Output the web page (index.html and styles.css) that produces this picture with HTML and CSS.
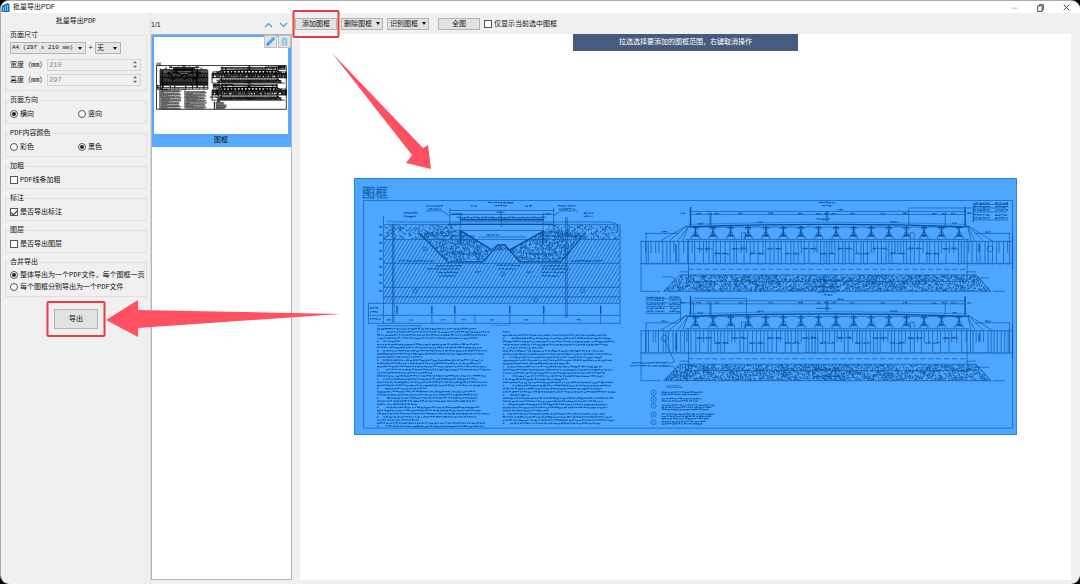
FILE: index.html
```html
<!DOCTYPE html>
<html lang="zh-CN">
<head>
<meta charset="utf-8">
<title>批量导出PDF</title>
<link rel="stylesheet" href="styles.css">
</head>
<body>
<div class="window">
  <header class="titlebar">
    <svg class="app-icon" viewBox="0 0 8 9" aria-hidden="true"><path d="M0 3 6 0 8 1v8H0z" fill="#1f6fb8"/><path d="M2 8V4M4 8V3M6 8V2" stroke="#8cc4ee" stroke-width="1"/></svg>
    <h1 class="app-title">批量导出PDF</h1>
    <div class="window-buttons">
      <button class="win-btn" type="button" aria-label="最小化"><svg viewBox="0 0 8 8"><path d="M1.500 4.500h5" stroke="#c8c8c8"/></svg></button>
      <button class="win-btn" type="button" aria-label="还原"><svg viewBox="0 0 8 8"><path d="M1.500 2.500h4v5h-4zM3 2.500v-1h3.500v4.500h-1" fill="none" stroke="#333" stroke-width=".8"/></svg></button>
      <button class="win-btn" type="button" aria-label="关闭"><svg viewBox="0 0 8 8"><path d="m1.500 1.500 5 5m0-5-5 5" stroke="#333" stroke-width=".8"/></svg></button>
    </div>
  </header>

  <div class="workspace">
    <form class="settings">
      <h2 class="panel-title">批量导出PDF</h2>

      <fieldset class="group">
        <legend>页面尺寸</legend>
        <div class="size-row">
          <span class="select-box select-paper"><select aria-label="纸张"><option>A4 (297 x 210 mm)</option></select></span>
          <span class="plus">+</span>
          <span class="select-box select-extra"><select aria-label="加长"><option>无</option></select></span>
        </div>
        <div class="field"><label for="pw">宽度（mm）</label><span class="spin"><input id="pw" type="text" value="210" disabled><svg viewBox="0 0 5 9"><path d="M2.500 0 5 3H0zM2.500 9 5 6H0z"/></svg></span></div>
        <div class="field"><label for="ph">高度（mm）</label><span class="spin"><input id="ph" type="text" value="297" disabled><svg viewBox="0 0 5 9"><path d="M2.500 0 5 3H0zM2.500 9 5 6H0z"/></svg></span></div>
      </fieldset>

      <fieldset class="group">
        <legend>页面方向</legend>
        <div class="options pair">
          <label class="option"><input type="radio" name="dir" checked>横向</label>
          <label class="option"><input type="radio" name="dir">竖向</label>
        </div>
      </fieldset>

      <fieldset class="group">
        <legend>PDF内容颜色</legend>
        <div class="options pair">
          <label class="option"><input type="radio" name="color">彩色</label>
          <label class="option"><input type="radio" name="color" checked>黑色</label>
        </div>
      </fieldset>

      <fieldset class="group tight">
        <legend>加粗</legend>
        <div class="options"><label class="option"><input type="checkbox">PDF线条加粗</label></div>
      </fieldset>

      <fieldset class="group tight">
        <legend>标注</legend>
        <div class="options"><label class="option"><input type="checkbox" checked>是否导出标注</label></div>
      </fieldset>

      <fieldset class="group tight">
        <legend>图层</legend>
        <div class="options"><label class="option"><input type="checkbox">是否导出图层</label></div>
      </fieldset>

      <fieldset class="group">
        <legend>合并导出</legend>
        <div class="options">
          <label class="option"><input type="radio" name="merge" checked>整体导出为一个PDF文件，每个图框一页</label>
          <label class="option"><input type="radio" name="merge">每个图框分别导出为一个PDF文件</label>
        </div>
      </fieldset>

      <div class="export-mark"><button class="btn btn-export" type="button">导出</button></div>
    </form>

    <section class="frames">
      <div class="frames-head">
        <span class="count">1/1</span>
        <button class="chevron" type="button" aria-label="上移"><svg viewBox="0 0 9 6"><path d="M1 5 4.500 1.500 8 5"/></svg></button>
        <button class="chevron" type="button" aria-label="下移"><svg viewBox="0 0 9 6"><path d="M1 1 4.500 4.500 8 1"/></svg></button>
      </div>
      <div class="frame-list">
        <figure class="card">
          <div class="thumb"><svg viewBox="360 182 656 250" preserveAspectRatio="none" aria-hidden="true"><use href="#plan"/></svg></div>
          <figcaption>图框</figcaption>
          <div class="card-tools">
            <button type="button" aria-label="编辑"><svg viewBox="0 0 12 12"><path d="m3 9 6-6" stroke="#3b9fe0" stroke-width="3.400" stroke-linecap="round"/><path d="m4 7 5-5M5 9l5-5" stroke="#a6d6f5" stroke-width=".6"/></svg></button>
            <button type="button" aria-label="删除"><svg viewBox="0 0 12 12"><path d="M3.500 4h5v6h-5zM3 3h6M5 2h2M5 5v4M7 5v4" fill="none" stroke="#6cbcf0" stroke-width=".9"/></svg></button>
          </div>
        </figure>
      </div>
    </section>

    <main class="viewer">
      <div class="toolbar">
        <button class="btn" type="button">添加图框</button>
        <button class="btn menu" type="button">删除图框</button>
        <button class="btn menu" type="button">识别图框</button>
        <button class="btn fit" type="button">全图</button>
        <label class="option only"><input type="checkbox">仅显示当前选中图框</label>
      </div>
      <div class="canvas">
        <p class="hint">拉选选择要添加的图框范围，右键取消操作</p>
        <div class="sheet">
          <svg viewBox="354 179 662 255" role="img" aria-label="图框">
            <g id="plan"></g>
          </svg>
        </div>
      </div>
    </main>
  </div>

  <svg class="callouts" aria-hidden="true">
    <rect x="293.500" y="11" width="45" height="26" rx="1"/>
    <rect x="47.500" y="302" width="57" height="34" rx="1"/>
    <path d="M332 53 423 148 428 145 431 169 406 163 412 155z"/>
    <path d="M341 314 138 310V300L106 320 138 337V328z"/>
  </svg>
</div>
<script src="plan.js"></script>
</body>
</html>
```

FILE: styles.css
```css
* { box-sizing: border-box; }
html, body { height: 100%; }
body {
  margin: 0;
  background: #000;
  color: #111;
  font: 7px/10px "Liberation Mono", "Noto Sans CJK SC", monospace;
}
button, input, select { font: inherit; color: inherit; margin: 0; }
h1, h2, p, figure { margin: 0; font-weight: normal; font-size: inherit; }

.window {
  position: relative;
  display: flex;
  flex-direction: column;
  min-height: 100vh;
  overflow: hidden;
  background: #f0f0f0;
  border-top: 1px solid #aaa;
  border-left: 1px solid #aaa;
  border-radius: 9px;
}

.titlebar {
  display: flex;
  align-items: center;
  height: 12px;
  padding-right: 8px;
  background: #fff;
}
.app-icon { width: 9px; height: 9px; }
.app-title {
  margin-left: 3px;
  font-family: "Liberation Sans", "Noto Sans CJK SC", sans-serif;
}
.window-buttons { display: flex; gap: 16px; margin-left: auto; }
.win-btn { width: 10px; height: 10px; padding: 0; border: 0; background: none; }
.win-btn svg { display: block; width: 9px; height: 9px; }

.workspace {
  flex: 1;
  display: grid;
  grid-template-columns: 150px 141px 1fr;
}

.settings {
  display: flex;
  flex-direction: column;
  gap: 4px;
  padding: 3px 3px 0 4px;
  border-right: 1px solid #ddd;
}
.panel-title { height: 10px; text-align: center; }
.group {
  min-width: 0;
  margin: 0;
  padding: 2px 0 3px 4px;
  border: 1px solid #e0e0e0;
}
.group.tight { padding-bottom: 2px; }
.group legend { padding: 0 2px 0 0; line-height: 10px; }

.size-row { display: flex; align-items: center; margin-bottom: 3px; }
.select-box {
  position: relative;
  height: 12px;
  background: #e6e6e6;
  border: 1px solid #b4b4b4;
}
.select-box select {
  display: block;
  width: 100%;
  height: 10px;
  padding: 0 1px;
  border: 0;
  background: none;
  appearance: none;
}
.select-box::after, .menu::after {
  content: "";
  border: 2px solid transparent;
  border-top: 3px solid #111;
  border-bottom: 0;
}
.select-box::after { position: absolute; right: 3px; top: 4px; pointer-events: none; }
.select-paper { width: 76px; }
.select-paper select { font-size: 6px; }
.select-extra { width: 26px; }
.plus { width: 9px; text-align: center; }

.field { display: flex; align-items: center; height: 15px; }
.field label { flex: none; width: 37px; white-space: nowrap; }
.spin {
  display: flex;
  align-items: center;
  flex: 1;
  min-width: 0;
  height: 12px;
  margin-right: 5px;
  padding-right: 3px;
  border: 1px solid #d4d4d4;
}
.spin input { flex: 1; width: 0; min-width: 0; height: 10px; padding: 0 1px; border: 0; background: none; color: #888; }
.spin svg { flex: none; width: 4px; height: 7px; fill: #666; }

.options { display: grid; }
.options.pair { grid-template-columns: 1fr 1fr; }
.option { display: flex; align-items: center; gap: 2px; height: 13px; white-space: nowrap; }
.group:last-of-type .option { height: 12px; }
.option input {
  appearance: none;
  flex: none;
  display: grid;
  place-items: center;
  width: 8px;
  height: 8px;
  background: #fff;
  border: 1px solid #555;
}
.option input[type="radio"] { border-radius: 50%; }
.option input[type="radio"]:checked::after {
  content: "";
  width: 4px;
  height: 4px;
  border-radius: 50%;
  background: #222;
}
.option input[type="checkbox"]:checked::after {
  content: "";
  width: 5px;
  height: 3px;
  border: solid #333;
  border-width: 0 0 1px 1px;
  rotate: -45deg;
}

.btn {
  display: flex;
  align-items: center;
  justify-content: center;
  gap: 4px;
  width: 42px;
  height: 12px;
  padding: 0;
  background: #e2e2e2;
  border: 1px solid #b4b4b4;
  white-space: nowrap;
}
.export-mark { display: flex; justify-content: center; padding-top: 8px; }
.btn-export { width: 44px; height: 20px; }

.frames { display: flex; flex-direction: column; padding-bottom: 4px; }
.frames-head { display: flex; align-items: center; gap: 6px; height: 21px; padding: 3px 4px 0 0; }
.count { margin-right: auto; font-family: "Liberation Sans", sans-serif; }
.chevron { width: 9px; height: 6px; padding: 0; border: 0; background: none; }
.chevron svg { display: block; width: 9px; height: 6px; fill: none; stroke: #3ba0e6; stroke-width: 1.2; }
.frame-list { flex: 1; background: #fff; border: 1px solid #b4b4b4; }

.card { position: relative; background: #55aaff; padding: 2px 3px 0 2px; }
.thumb { padding: 25px 1px 24px 2px; height: 97px; background: #fff; }
.thumb svg { display: block; width: 100%; height: 48px; color: #000; --pen: 4; --mark: 6; --text-ink: 4; --title: #000; }
.card figcaption { height: 13px; line-height: 13px; text-align: center; }
.card-tools { position: absolute; top: 0; right: 0; display: flex; gap: 1px; }
.card-tools button { width: 13px; height: 13px; padding: 0; background: #e4e4e4; border: 1px solid #c0c0c0; }
.card-tools svg { display: block; width: 11px; height: 11px; }

.viewer { display: flex; flex-direction: column; min-width: 0; padding: 0 9px 4px 3px; }
.toolbar { display: flex; align-items: center; gap: 4px; height: 21px; }
.fit { margin-left: 5px; }
.menu::after { flex: none; }
.only { font-family: "Liberation Sans", "Noto Sans CJK SC", sans-serif; }
.canvas {
  flex: 1;
  display: flex;
  flex-direction: column;
  align-items: center;
  margin-left: 5px;
  background: #fff;
}
.hint {
  width: 225px;
  height: 17px;
  line-height: 17px;
  text-align: center;
  color: #fff;
  background: #475b80;
}
.sheet {
  width: 86%;
  margin-top: 127px;
  background: #4da6ff;
  border: 1px solid #1c86e4;
  color: #0a4d94;
}
.sheet svg { display: block; width: 100%; --pen: 0.6; --mark: 1.3; --text-ink: 1.3; --title: #1668b8; }

#plan { fill: none; stroke: currentColor; stroke-width: var(--pen); }
#plan .ink { stroke-width: var(--text-ink); opacity: 0.85; }
#plan .bold { stroke-width: var(--mark); }
#plan .faint { opacity: 0.7; }
#plan .grain { stroke-width: var(--mark); opacity: 0.8; }
#plan text { fill: var(--title); stroke: var(--title); stroke-width: 0.3; font: 13px "Noto Sans CJK SC", sans-serif; }

.callouts { position: absolute; inset: -1px 0 0 -1px; width: 100%; height: 100%; pointer-events: none; }
.callouts rect { fill: none; stroke: #ee3a40; stroke-width: 2; }
.callouts path { fill: #ff5062; }
```

FILE: plan.js
```js
// Builds the bridge drawing shared by the sheet and its thumbnail.
let seed = 7;
const rnd = () => (seed = (seed * 16807) % 2147483647) / 2147483647;
const out = [];
const path = (d, cls = "") => out.push(`<path class="${cls}" d="${d}"/>`);
const h = (x1, x2, y) => `M${x1} ${y}H${x2}`;
const v = (x, y1, y2) => `M${x} ${y1}V${y2}`;

// A run of annotation too small to read: broken, uneven strokes.
function note(x1, x2, y) {
  let d = "";
  for (let x = x1; x < x2;) {
    const w = 0.8 + rnd() * 2.6;
    d += h(x.toFixed(1), Math.min(x + w, x2).toFixed(1), (y + rnd() * 0.7 - 0.35).toFixed(1));
    x += w + 0.3 + rnd() * 0.7;
  }
  return d;
}

let clips = 0;
function clipped(points, d, cls) {
  const id = "area" + clips++;
  out.push(`<clipPath id="${id}"><polygon points="${points}"/></clipPath><path class="${cls}" clip-path="url(#${id})" d="${d}"/>`);
}
function grain(points, x1, y1, x2, y2, density) {
  let d = "";
  const n = (x2 - x1) * (y2 - y1) * density;
  for (let i = 0; i < n; i++) {
    d += `M${(x1 + rnd() * (x2 - x1)).toFixed(1)} ${(y1 + rnd() * (y2 - y1)).toFixed(1)}l${(0.3 + rnd()).toFixed(1)} ${(rnd() * 0.6 - 0.3).toFixed(1)}`;
  }
  clipped(points, d, "grain");
}

out.push('<text x="361" y="197">图框</text>');
path("M362.5 200.500H1012.500V428.500H362.500z");

// Cross section
let hatch = "";
for (let x = 345; x < 625; x += 3.6) hatch += `M${x.toFixed(1)} 303l38 -64`;
clipped("383,239 422,239 447,262 482,262 493,249 504,249 519,262 560,262 582,239 619,239 619,303 383,303", hatch, "");
grain("383,225 455,225 460,232 418,239 383,239", 383, 225, 460, 239, 0.35);
grain("548,225 619,225 619,239 584,239 545,232", 545, 225, 619, 239, 0.35);
grain("418,233 460,230 491,250 482,261 447,261", 418, 230, 491, 261, 0.6);
grain("584,233 545,230 509,250 519,261 560,261", 509, 230, 584, 261, 0.6);
grain("485,252 497,244 504,244 513,254 503,250 492,251", 485, 244, 513, 254, 0.8);
path("M418 233 447 262H482L497 245H504L519 262H560L585 233M460 231 491 250M543 231 509 250", "bold");
path(h(383, 619, 224.5) + h(383, 619, 239.5) + h(383, 619, 263.5) + h(383, 619, 287.5) + h(383, 619, 297) + h(367, 619, 303.5) + h(367, 619, 315.5) + h(367, 619, 323.5) + v(367.5, 303, 324) + v(382.5, 216, 324) + v(619.5, 225, 324) + v(391.5, 224, 323) + v(393, 224, 323) + v(565, 217, 318) + v(566.5, 217, 318));
path([431, 454, 474, 509, 543, 600].map(x => v(x, 315, 324)).join(""));
path([396, 431, 454, 509, 543, 600].map(x => v(x, 306, 314)).join(""), "bold");
path([388, 410, 442, 463, 491, 526, 578].map(x => note(x - 2, x + 2, 320)).join("") + note(369, 378, 308) + note(369, 377, 312) + note(369, 380, 319), "ink");
path(h(449, 553, 210.5) + h(449, 553, 214.5) + v(449, 208, 224) + v(553, 208, 224) + v(459.5, 213, 239) + v(542.5, 213, 239) + v(500.5, 213, 228) + "M386 222q4 -2 8 0H610l6 2M425 211H441L449 216M577 211H560L553 216M460 230.500H542M478 237H525");
path(h(459, 543, 220) + v(460, 232, 245) + v(542, 232, 245) + h(447, 553, 224.5), "bold");
let teeth = "";
for (let x = 460; x < 543; x += 2) teeth += v(x, 218, 221);
path(teeth);
path([[487, 513, 202.5], [494, 506, 205.5], [425, 442, 206], [427, 440, 209], [470, 477, 206], [524, 531, 206], [557, 575, 206], [558, 574, 209], [403, 417, 213], [403, 415, 216.5], [583, 593, 213], [583, 592, 216.5], [451, 462, 214], [496, 504, 212], [545, 551, 214], [397, 433, 261], [570, 603, 261], [435, 461, 266], [427, 459, 269], [436, 458, 272.5], [438, 455, 276], [496, 520, 265.5], [498, 515, 269], [541, 566, 266], [541, 570, 269], [541, 564, 272.5], [541, 558, 276], [474, 480, 272], [526, 532, 272], [486, 499, 235], [440, 475, 236], [545, 575, 236], [452, 480, 254], [525, 550, 254]].map(a => note(...a)).join(""), "ink");
path(note(456, 545, 217.5), "ink");
path([227, 235, 243, 251, 259, 267, 275, 283, 291].map(y => h(378, 381, y)).join(""), "bold");
out.push('<circle cx="424" cy="249" r="2"/><circle cx="414" cy="291" r="2"/><circle cx="502" cy="274" r="2"/><circle cx="582" cy="291" r="2"/><circle cx="535" cy="300" r="2"/>');

// Explanatory notes, two columns
path(h(376, 421, 326) + note(491, 509, 325.5));
function column(x, width, y1, y2) {
  let d = "", i = 0;
  for (let y = y1; y < y2; y += 3.15, i++) {
    const indent = i % 3 === 1 ? 4 + rnd() * 6 : 0;
    const end = x + width * (i % 5 === 4 ? 0.2 + rnd() * 0.4 : 0.86 + rnd() * 0.14);
    if (indent) d += h(x, x + 1.5, y.toFixed(1));
    d += note(x + indent, end, y);
  }
  path(d, "ink");
}
column(376, 114, 329, 427);
path(note(502, 509, 332), "ink");
column(502, 113, 335.5, 424);

// Bridge elevation, drawn twice
function elevation(o) {
  const Y = y => +(y + o).toFixed(1);
  path(h(640, 1012, Y(241.5)) + h(640, 1012, Y(263.5)) + h(689, 966, Y(211.5)) + h(689, 966, Y(214.5)) + h(685, 969, Y(239.5)) + v(640.5, Y(241), Y(291)) + v(1012.5, Y(235), Y(269)) + v(688, Y(240), Y(280)) + v(967, Y(240), Y(281)) + h(688, 967, Y(281.5)));
  let d = "";
  for (let x = 645; x < 1010; x += 2.5 + rnd() * 2.5) d += v(x.toFixed(1), Y(241), Y(rnd() < 0.3 ? 253 : 263));
  path(d);
  path(`M686 ${Y(227)}Q827 ${Y(222)} 969 ${Y(227)}`, "bold");
  path(`M688 ${Y(224.5)}Q827 ${Y(220)} 967 ${Y(224.5)}`, "faint");
  let piers = "", caps = "", spans = "";
  for (let i = 0; i < 16; i++) {
    const x = +(695 + i * 17.6).toFixed(1);
    piers += v(x, Y(226), Y(236)) + h(x - 2.5, x + 2.5, Y(235.5)) + h(x - 3, x + 3, Y(227.5));
    caps += `M${x - 4} ${Y(239)}v-2.500h8v2.500M${x - 3} ${Y(236)}l2 -4h2l2 4`;
    if (i < 15) spans += `M${x + 1} ${Y(230)}q1 -2.500 5 -3h5.500q4 .5 5 3`;
  }
  path(piers, "bold");
  path(caps + spans);
  path(v(690, Y(207), Y(226)) + v(965, Y(207), Y(226)), "bold");
  path(v(709.5, Y(214), Y(226)) + v(710.5, Y(214), Y(226)) + v(945, Y(214), Y(226)) + v(826, Y(211), Y(222)) + v(827.5, Y(211), Y(222)) + `M741 ${Y(239)}v-6h4v6M910 ${Y(239)}v-6h4v6`);
  path([[686, 226, 660, 241], [686, 226, 669, 241], [687, 228, 677, 241], [687, 228, 682, 241], [968, 226, 992, 241], [968, 226, 983, 241], [968, 228, 975, 241], [968, 228, 971, 241]].map(a => `M${a[0]} ${Y(a[1])}L${a[2]} ${Y(a[3])}`).join("") + h(645, 678, Y(233.5)) + v(645.5, Y(233), Y(263)) + h(975, 1010, Y(233.5)) + v(1009.5, Y(233), Y(263)));
  let levels = "";
  for (let i = 0; i < 15; i++) {
    const x = 696 + i * 17.6, y = Y(i % 2 ? 254 : 249);
    levels += note(x, x + 16, y);
    path(note(x + 1, x + 6, y - 0.5) + note(x + 9, x + 14, y - 0.5), "ink");
  }
  path(levels);
  path([682, 698, 709, 716, 740, 770, 800, 818, 826, 833, 852, 882, 905, 934, 944, 953, 969].map(x => note(x - 2, x + 2.5, Y(213.5))).join(""), "ink");
  path([[818, 836, 202.5], [822, 832, 205.5], [837, 843, 210], [816, 830, 219], [697, 703, 223.5], [757, 763, 222], [890, 897, 222], [952, 957, 223.5], [661, 667, 232], [985, 991, 232]].map(a => note(a[0], a[1], Y(a[2]))).join(""), "ink");
  path(v(675.5, Y(244), Y(262)) + v(979, Y(244), Y(252)), "ink");
  out.push(`<circle cx="${o ? 664 : 990}" cy="${Y(249)}" r="3"/>`);
  path(note(640, 1010, Y(264.2)), "faint");
  let dash = "";
  for (let x = 688; x < 964; x += 8) dash += h(x, x + 5, Y(269.5));
  path(dash);
  const pts = `679,${Y(275)} 976,${Y(275)} 991,${Y(291.5)} 663,${Y(291.5)}`;
  grain(pts, 663, Y(275), 991, Y(291.5), 0.6);
  out.push(`<polygon points="${pts}"/>`);
  path(note(814, 842, Y(280)) + note(814, 840, Y(287)), "ink");
  path(h(679, 688, Y(272)) + h(967, 976, Y(272)) + h(640, 660, Y(291.5)) + `M662 ${Y(277)}h10l3 3M976 ${Y(278)}h13M993 ${Y(291.5)}h12`);
}
elevation(0);
elevation(89.5);

// Leader notes
path([203.5, 206.5, 210, 215, 218].map(y => note(974, 990, y) + note(995, 1008, y)).join("") + [297.5, 300.5, 304.5, 308.5, 311.5].map(y => note(646, 664, y) + note(669, 679, y)).join("") + note(631, 668, 363) + note(630, 668, 366), "ink");
path("M908.500 225V208H973V222M973.500 203V222M973 204.500H1008M973 208H1007M973 212H1007M973 220H1008M645 299H680V322M645 303H693V320M645 306.500H680M645 313.500H680M693 298.500H746V318M664 340 674 362 668 364");
path(note(667, 679, 386) + h(665, 682, 387.5));
[[393, 2], [399.5, 2], [406, 3], [415, 3], [422.5, 2]].forEach(([y, rows], i) => {
  out.push(`<circle cx="653" cy="${y}" r="2.6"/>`);
  path(v(653, y - 1, y + 1));
  for (let r = 0; r < rows; r++) path(note(661, [702, 701, 714, 714, 705][i] - r * 3, y - 0.5 + r * 2.2), "ink");
});

document.getElementById("plan").innerHTML = out.join("");
```
